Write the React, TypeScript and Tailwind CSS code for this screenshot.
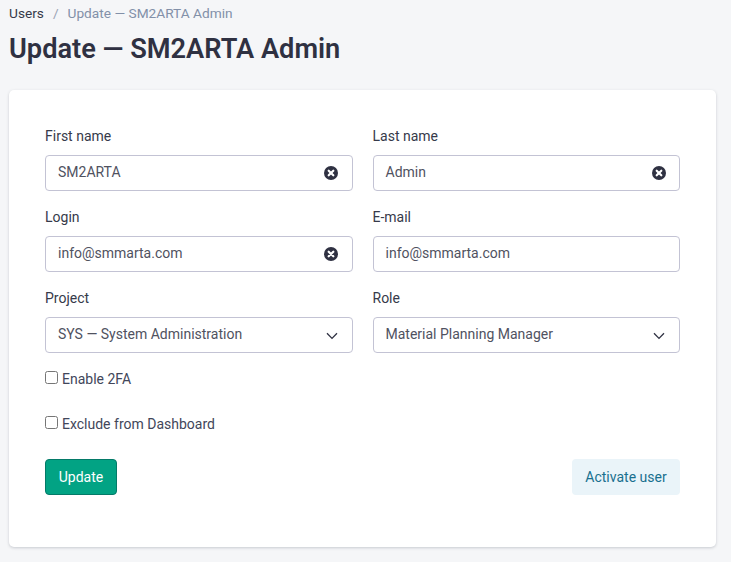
import React from "react";

function Clear() {
  return (
    <svg viewBox="0 0 14 14" className="absolute right-[13.5px] top-[10px] h-[14px] w-[14px]">
      <circle cx="7" cy="7" r="7" fill="#2f3142" />
      <path d="M4.7 4.7 9.3 9.3M9.3 4.7 4.7 9.3" stroke="#fff" strokeWidth="2.2" strokeLinecap="round" />
    </svg>
  );
}

function Chevron() {
  return (
    <svg viewBox="0 0 12 8" className="absolute right-[14px] top-[14px] h-[8px] w-[12px]" fill="none">
      <path d="M1 1.2 6 6.4 11 1.2" stroke="#2f3142" strokeWidth="1.3" />
    </svg>
  );
}

function Field({ label, value, clear, select }: { label: string; value: string; clear?: boolean; select?: boolean }) {
  return (
    <div className="mb-4">
      <div className="mb-2 h-[21px] text-[14px] leading-[21px] text-[#363a4a]">{label}</div>
      <div className="relative h-9 rounded border border-[#c3c3d4] bg-white pl-3 text-[14px] leading-[32px] text-[#50525f]">
        {value}
        {clear && <Clear />}
        {select && <Chevron />}
      </div>
    </div>
  );
}

function Check({ label, className }: { label: string; className: string }) {
  return (
    <label className={`flex h-[21px] items-center text-[14px] text-[#42465a] ${className}`}>
      <input type="checkbox" className="mr-[4px] h-[13px] w-[13px] -translate-y-[2px]" />
      {label}
    </label>
  );
}

export default function App() {
  return (
    <div className="h-[562px] overflow-hidden bg-[#f5f6f8] pl-[9px] pr-[15px] font-['Roboto',sans-serif]">
      <div className="flex h-[26px] items-center text-[13.7px] text-[#8290a8]">
        <span className="text-[#363a4a]">Users</span>
        <span className="mx-[9px] text-[#9aa3b5]">/</span>
        <span>Update — SM2ARTA Admin</span>
      </div>
      <h1 className="mt-[5px] h-[36px] text-[27.2px] font-semibold leading-[36px] text-[#2f3142]">Update — SM2ARTA Admin</h1>
      <div className="mt-[23px] h-[457px] rounded-[5px] bg-white px-9 pt-9 shadow-[0_1px_3px_rgba(40,50,70,0.22)]">
        <div className="grid grid-cols-2 gap-x-5">
          <Field label="First name" value="SM2ARTA" clear />
          <Field label="Last name" value="Admin" clear />
          <Field label="Login" value="info@smmarta.com" clear />
          <Field label="E-mail" value="info@smmarta.com" />
          <Field label="Project" value="SYS — System Administration" select />
          <Field label="Role" value="Material Planning Manager" select />
        </div>
        <Check label="Enable 2FA" className="mt-0" />
        <Check label="Exclude from Dashboard" className="mt-[24px]" />
        <div className="mt-[24px] flex items-center justify-between">
          <button className="h-9 w-[72px] rounded border border-[#047a68] bg-[#02a384] text-[14px] font-normal text-white">Update</button>
          <button className="h-9 w-[108px] rounded bg-[#eaf4f9] text-[14px] text-[#19708f]">Activate user</button>
        </div>
      </div>
    </div>
  );
}
